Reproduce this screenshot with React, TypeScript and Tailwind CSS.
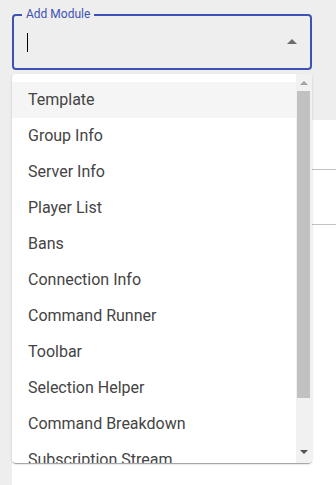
const modules = [
  "Template",
  "Group Info",
  "Server Info",
  "Player List",
  "Bans",
  "Connection Info",
  "Command Runner",
  "Toolbar",
  "Selection Helper",
  "Command Breakdown",
  "Subscription Stream",
];

export default function App() {
  return (
    <div
      className="w-[336px] h-[485px] overflow-hidden bg-[#eeeeee] pl-3 pt-[14px] flex flex-col"
      style={{ fontFamily: "Roboto, 'Liberation Sans', sans-serif" }}
    >
      <div className="relative w-[300px] z-10">
        {/* outlined field */}
        <div className="relative h-[56px] rounded-[4px] border-2 border-[#3f51b5]">
          <span className="absolute -top-[10px] left-[8px] px-[4px] bg-[#eeeeee] text-[12px] leading-[16px] text-[#3f51b5]">
            Add Module
          </span>
          <div className="flex items-center h-full pl-[13px] pr-[6px]">
            <span className="w-px h-[19px] bg-black" />
            <div className="flex-1" />
            <svg viewBox="0 0 24 24" className="w-6 h-6 fill-[rgba(0,0,0,0.54)]">
              <path d="M7 14l5-5 5 5z" />
            </svg>
          </div>
        </div>

        {/* dropdown list */}
        <div className="absolute top-[60px] left-0 w-[300px] h-[389px] flex overflow-hidden bg-white rounded-[4px] shadow-[0_2px_1px_-1px_rgba(0,0,0,0.2),0_1px_1px_0_rgba(0,0,0,0.14),0_1px_3px_0_rgba(0,0,0,0.12)]">
          <ul className="flex-1 overflow-hidden py-2">
            {modules.map((m, i) => (
              <li
                key={m}
                className={`h-9 shrink-0 flex items-center px-4 text-[16px] text-[#444444] ${
                  i === 0 ? "bg-[#f5f5f5]" : ""
                }`}
              >
                {m}
              </li>
            ))}
          </ul>
          {/* scrollbar */}
          <div className="w-[16px] bg-[#f1f1f1] flex flex-col">
            <div className="h-[17px] flex items-center justify-center">
              <svg viewBox="0 0 8 4" className="w-[8px] h-[4px] fill-[#a3a3a3]">
                <path d="M0 4L4 0L8 4Z" />
              </svg>
            </div>
            <div className="h-[307px] ml-[1px] mr-[2px] bg-[#c1c1c1]" />
            <div className="flex-1 flex items-end justify-center pb-[9px]">
              <svg viewBox="0 0 8 4" className="w-[8px] h-[4px] fill-[#505050]">
                <path d="M0 0L8 0L4 4Z" />
              </svg>
            </div>
          </div>
        </div>
      </div>

      {/* content behind the popup */}
      <div className="mt-[50px] flex-1 bg-white">
        <div className="h-[50px] border-b border-[#c4c4c4]" />
        <div className="h-[55px] border-b border-[#c4c4c4]" />
      </div>
    </div>
  );
}
